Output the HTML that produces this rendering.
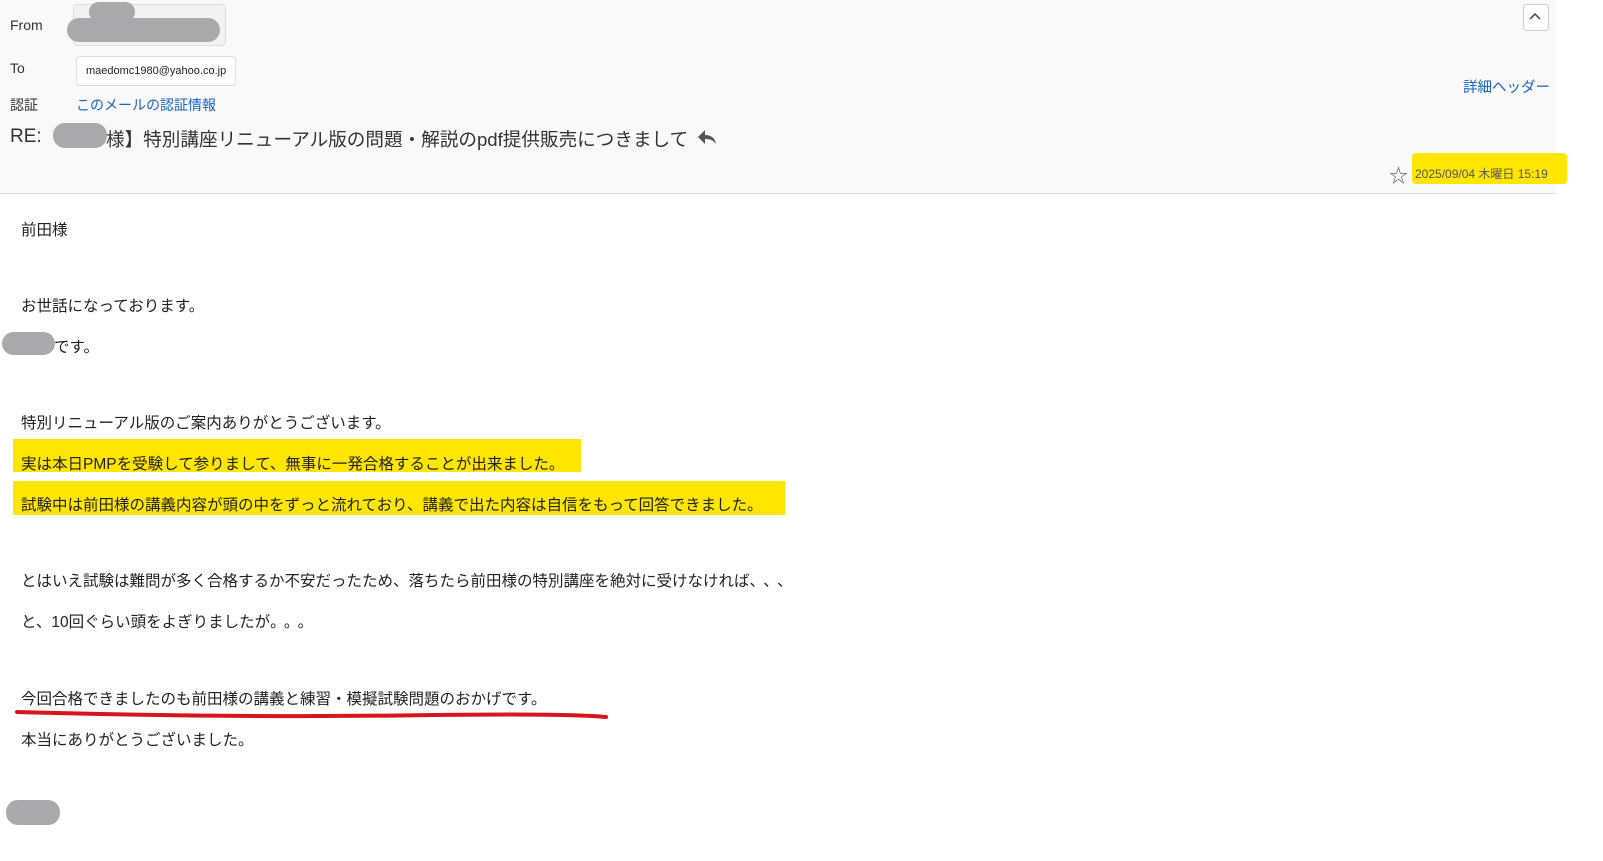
<!DOCTYPE html>
<html><head><meta charset="utf-8"><style>
body{margin:0;width:1603px;height:861px;background:#fff;font-family:"Liberation Sans","Noto Sans CJK JP",sans-serif;color:#222;position:relative;overflow:hidden}
.hdr{position:absolute;left:0;top:0;width:1556px;height:193px;background:#f9f9f9;border-bottom:1px solid #ddd}
.a{position:absolute;white-space:nowrap}
.lbl{font-size:14px;color:#333}
.blob{position:absolute;background:#a9a9ad;border-radius:14px}
.t{position:absolute;left:21px;font-size:15.5px;white-space:nowrap;color:#222}
.hl{position:absolute;background:#ffe600}
</style></head><body>
<div class="hdr"></div>
<div class="a lbl" style="left:10px;top:17px">From</div>
<div class="a" style="left:73px;top:4px;width:151px;height:40px;border:1px solid #ddd;border-radius:4px;background:#f2f2f2"></div>
<div class="blob" style="left:67px;top:18px;width:153px;height:24px;border-radius:12px"></div>
<div class="blob" style="left:89px;top:2px;width:46px;height:20px;border-radius:10px"></div>
<div class="a lbl" style="left:10px;top:60px">To</div>
<div class="a" style="left:76px;top:56px;width:158px;height:28px;border:1px solid #ddd;border-radius:4px;background:#fff;font-size:11px;line-height:28px;text-indent:9px;color:#222">maedomc1980@yahoo.co.jp</div>
<div class="a lbl" style="left:10px;top:95px">認証</div>
<div class="a" style="left:76px;top:95px;font-size:14px;color:#1a64c2">このメールの認証情報</div>
<div class="a" style="left:10px;top:126px;font-size:19px;color:#333">RE:</div>
<div class="blob" style="left:53px;top:123px;width:54px;height:25px;border-radius:12px"></div>
<div class="a" style="left:106px;top:125px;font-size:18.6px;color:#333">様】特別講座リニューアル版の問題・解説のpdf提供販売につきまして</div>
<svg class="a" style="left:697px;top:128px" width="20" height="18" viewBox="0 0 20 18"><path d="M8 2 L1 9 L8 16 L8 11 C13 11 16 12 19 16 C18 10 14 7 8 7 Z" fill="#555"/></svg>
<div class="a" style="left:1523px;top:4px;width:24px;height:25px;border:1px solid #ccc;border-radius:4px;background:#fff"></div>
<svg class="a" style="left:1528px;top:10px" width="14" height="12"><path d="M2 9 L7 4 L12 9" stroke="#555" stroke-width="1.6" fill="none"/></svg>
<div class="a" style="left:1463px;top:76px;font-size:14.5px;color:#1a64c2">詳細ヘッダー</div>
<div class="hl" style="left:1412px;top:153px;width:155px;height:31px;border-radius:4px"></div>
<div class="a" style="left:1389px;top:161px;font-size:19px;color:#666">☆</div>
<div class="a" style="left:1415px;top:165px;font-size:12px;color:#555">2025/09/04 木曜日 15:19</div>

<div class="t" style="top:218px">前田様</div>
<div class="t" style="top:294px">お世話になっております。</div>
<div class="blob" style="left:2px;top:332px;width:53px;height:23px;border-radius:12px"></div>
<div class="t" style="top:335px;left:54px">です。</div>
<div class="t" style="top:411px">特別リニューアル版のご案内ありがとうございます。</div>
<div class="hl" style="left:13px;top:439px;width:568px;height:33px"></div>
<div class="t" style="top:452px">実は本日PMPを受験して参りまして、無事に一発合格することが出来ました。</div>
<div class="hl" style="left:13px;top:481px;width:772px;height:34px"></div>
<div class="t" style="top:493px">試験中は前田様の講義内容が頭の中をずっと流れており、講義で出た内容は自信をもって回答できました。</div>
<div class="t" style="top:569px">とはいえ試験は難問が多く合格するか不安だったため、落ちたら前田様の特別講座を絶対に受けなければ<span style="letter-spacing:6px">、、、</span></div>
<div class="t" style="top:610px">と、10回ぐらい頭をよぎりましたが<span style="letter-spacing:6px">。。。</span></div>
<div class="t" style="top:687px">今回合格できましたのも前田様の講義と練習・模擬試験問題のおかげです。</div>
<svg class="a" style="left:14px;top:704px" width="600" height="20"><path d="M3 8 C150 12 300 13 420 11 C500 10 560 10 592 13" stroke="#d9141a" stroke-width="4" fill="none" stroke-linecap="round"/></svg>
<div class="t" style="top:728px">本当にありがとうございました。</div>
<div class="blob" style="left:6px;top:800px;width:54px;height:25px;border-radius:12px"></div>
</body></html>
